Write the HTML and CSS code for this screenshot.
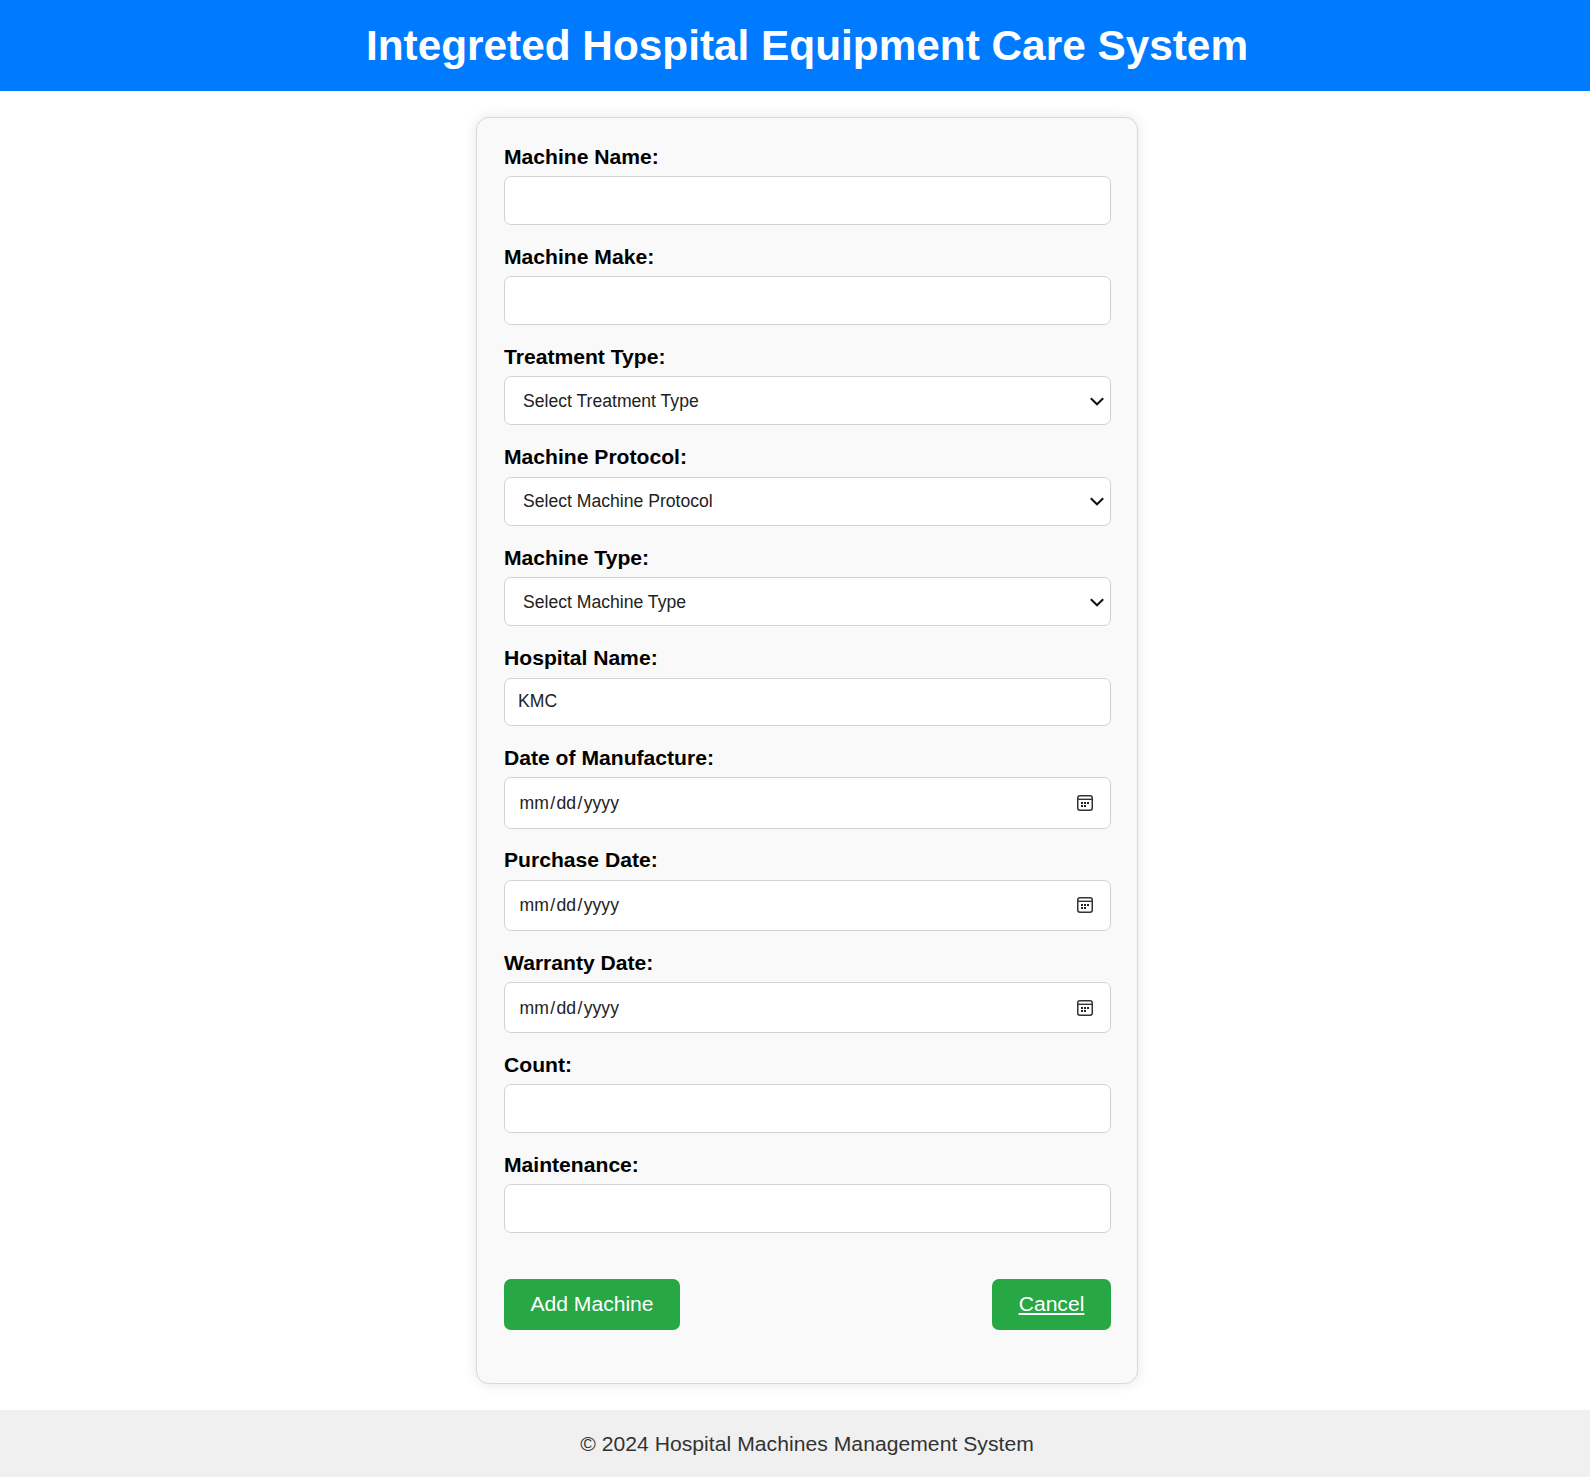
FILE: index.html
```html
<!DOCTYPE html>
<html lang="en">
<head>
<meta charset="utf-8">
<title>Integreted Hospital Equipment Care System</title>
<link rel="stylesheet" href="styles.css">
</head>
<body>
<svg class="defs" aria-hidden="true">
  <symbol id="chevron" viewBox="0 0 14 9"><path d="M.8 1.2 7 7.3 13.2 1.2" fill="none" stroke="#111" stroke-width="2"/></symbol>
  <symbol id="calendar" viewBox="0 0 16 16">
    <rect x=".75" y=".75" width="14.5" height="14.5" rx="2.2" fill="none" stroke="#333" stroke-width="1.5"/>
    <path d="M1 4.3h14" stroke="#333" stroke-width="1.4"/>
    <path d="M4 7h2v2H4zM7 7h2v2H7zM10 7h2v2h-2zM4 10h2v2H4zM7 10h2v2H7z" fill="#222"/>
  </symbol>
</svg>
<header class="header"><h1 class="title">Integreted Hospital Equipment Care System</h1></header>
<main class="main">
  <form class="card">
    <div class="field"><label class="label" for="name">Machine Name:</label><input class="control" id="name" type="text"></div>
    <div class="field"><label class="label" for="make">Machine Make:</label><input class="control" id="make" type="text"></div>
    <div class="field field-select"><label class="label" for="treatment">Treatment Type:</label>
      <div class="control picker"><select class="select" id="treatment"><option>Select Treatment Type</option></select><svg class="chevron"><use href="#chevron"/></svg></div></div>
    <div class="field field-select"><label class="label" for="protocol">Machine Protocol:</label>
      <div class="control picker"><select class="select" id="protocol"><option>Select Machine Protocol</option></select><svg class="chevron"><use href="#chevron"/></svg></div></div>
    <div class="field field-select"><label class="label" for="type">Machine Type:</label>
      <div class="control picker"><select class="select" id="type"><option>Select Machine Type</option></select><svg class="chevron"><use href="#chevron"/></svg></div></div>
    <div class="field"><label class="label" for="hospital">Hospital Name:</label><input class="control" id="hospital" type="text" value="KMC"></div>
    <div class="field field-date"><span class="label">Date of Manufacture:</span>
      <div class="control date"><span class="date-text">mm<i class="slash">/</i>dd<i class="slash">/</i>yyyy</span><svg class="calendar"><use href="#calendar"/></svg></div></div>
    <div class="field field-date"><span class="label">Purchase Date:</span>
      <div class="control date"><span class="date-text">mm<i class="slash">/</i>dd<i class="slash">/</i>yyyy</span><svg class="calendar"><use href="#calendar"/></svg></div></div>
    <div class="field field-date"><span class="label">Warranty Date:</span>
      <div class="control date"><span class="date-text">mm<i class="slash">/</i>dd<i class="slash">/</i>yyyy</span><svg class="calendar"><use href="#calendar"/></svg></div></div>
    <div class="field"><label class="label" for="count">Count:</label><input class="control" id="count" type="text"></div>
    <div class="field"><label class="label" for="maintenance">Maintenance:</label><input class="control" id="maintenance" type="text"></div>
    <div class="actions"><button class="button" type="button">Add Machine</button><a class="button cancel" href="#">Cancel</a></div>
  </form>
</main>
<footer class="footer">© 2024 Hospital Machines Management System</footer>
</body>
</html>
```
FILE: styles.css
```css
* { box-sizing: border-box; }
body {
  margin: 0;
  min-height: 1477px;
  display: flex;
  flex-direction: column;
  background: #fff;
  color: #000;
  font: 21.12px/24px "Liberation Sans", Arial, sans-serif;
}
.defs { display: none; }
.header {
  height: 91px;
  padding-left: 24px;
  background: #007bff;
  display: flex;
  align-items: center;
  justify-content: center;
}
.title { margin: 0; color: #fff; font-size: 42.33px; line-height: 50px; white-space: nowrap; }
.main { height: 1319px; padding-top: 26px; padding-left: 476px; }
.card {
  width: 662px;
  height: 1267px;
  padding: 26px 26px 0 27px;
  border: 1px solid #d8d8d8;
  border-radius: 13px;
  background: #f9f9f9;
  box-shadow: 0 0 13px rgba(0, 0, 0, .1);
}
.field { height: 99.9px; }
.field-select { height: 100.5px; }
.field-date { height: 102.3px; }
.label { display: block; height: 32.3px; padding-top: 1px; font-weight: bold; }
.control {
  display: block;
  width: 607px;
  height: 48.6px;
  padding: 0 13px;
  border: 1px solid #d2d2d2;
  border-radius: 7px;
  background: #fff;
  color: #222;
  font: 17.6px/20px "Liberation Sans", Arial, sans-serif;
}
.picker { height: 49.2px; display: flex; align-items: center; padding: 0 6px 0 18px; }
.select {
  appearance: none;
  flex: 1;
  padding: 0;
  border: 0;
  background: none;
  color: inherit;
  font: inherit;
}
.chevron { width: 14px; height: 9px; position: relative; top: .6px; }
.date { height: 51.2px; display: flex; align-items: center; justify-content: space-between; padding: 0 17px 0 14.5px; }
.slash { font-style: normal; margin: 0 1.4px; }
.calendar { width: 16px; height: 16px; }
.actions { display: flex; justify-content: space-between; margin-top: 27px; }
.button {
  width: 176px;
  height: 51.4px;
  padding: 0 0 2px;
  border: 0;
  border-radius: 7px;
  background: #28a745;
  color: #fff;
  font: inherit;
  line-height: 49px;
  text-align: center;
}
.cancel { width: 119px; text-decoration: underline; }
.footer { height: 67px; background: #f0f0f0; color: #333; line-height: 67px; text-align: center; padding-left: 24px; letter-spacing: .04px; }
```
